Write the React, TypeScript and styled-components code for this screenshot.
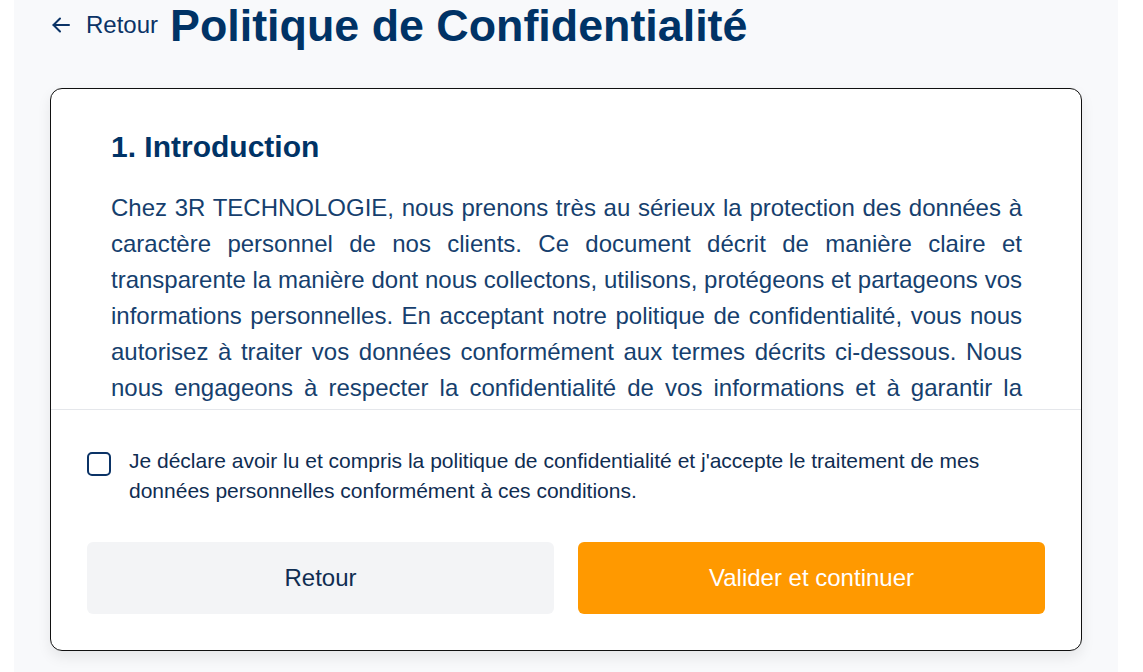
import React, {FC, useState} from 'react'
import styled, {createGlobalStyle} from 'styled-components'

const GlobalStyle = createGlobalStyle`
    * {
        box-sizing: border-box;
    }
    body {
        margin: 0;
        background: #ffffff;
        font-family: "Liberation Sans", Arial, sans-serif;
    }
`

const Page = styled.div`
    margin-left: 14px;
    width: 1104px;
    min-height: 672px;
    background: #f8f9fb;
    padding: 0 36px;
`

const Header = styled.div`
    height: 50px;
    display: flex;
    flex-direction: row;
    align-items: center;
    margin-bottom: 38px;
`

const BackLink = styled.a`
    display: flex;
    align-items: center;
    gap: 16px;
    color: #0b3366;
    font-size: 24px;
    text-decoration: none;
    cursor: pointer;
    margin-left: 2px;
    margin-right: 12px;
`

const Title = styled.h1`
    margin: 0;
    font-size: 44.8px;
    font-weight: 700;
    line-height: 50px;
    color: #003366;
`

const Card = styled.div`
    background: #ffffff;
    border: 1px solid #111111;
    border-radius: 12px;
    box-shadow: 0 6px 14px rgba(0, 0, 0, 0.08);
    overflow: hidden;
`

const ScrollArea = styled.div`
    height: 321px;
    overflow: hidden;
    padding: 40px 59px 0 60px;
    border-bottom: 1px solid #e5e7eb;
`

const SectionTitle = styled.h2`
    margin: 0 0 25px;
    font-size: 30px;
    line-height: 36px;
    font-weight: 700;
    color: #003366;
`

const Paragraph = styled.p`
    margin: 0;
    font-size: 24px;
    line-height: 36px;
    text-align: justify;
    color: #163f6e;
`

const Footer = styled.div`
    padding: 36px 36px 36px;
`

const ConsentRow = styled.label`
    display: flex;
    align-items: flex-start;
    gap: 18px;
    cursor: pointer;
`

const CheckBox = styled.span<{checked: boolean}>`
    flex: 0 0 24px;
    width: 24px;
    height: 24px;
    margin-top: 6px;
    border: 2px solid #0b3366;
    border-radius: 5px;
    background: ${props => props.checked ? '#0b3366' : '#ffffff'};
    display: flex;
    align-items: center;
    justify-content: center;
`

const ConsentText = styled.span`
    font-size: 21px;
    line-height: 30px;
    color: #0f2d52;
`

const Buttons = styled.div`
    display: grid;
    grid-template-columns: 1fr 1fr;
    gap: 24px;
    margin-top: 36px;
`

const Button = styled.button<{primary?: boolean}>`
    height: 72px;
    border: none;
    border-radius: 6px;
    font-family: "Liberation Sans", Arial, sans-serif;
    font-size: 24px;
    cursor: pointer;
    background: ${props => props.primary ? '#ff9900' : '#f3f4f6'};
    color: ${props => props.primary ? '#ffffff' : '#0f2d52'};
`

const ArrowLeft: FC = () => (
    <svg width="18" height="16" viewBox="0 0 18 16" fill="none" stroke="currentColor" strokeWidth="2" strokeLinecap="round" strokeLinejoin="round">
        <path d="M17 8H1.5" />
        <path d="M8 1.5L1.5 8L8 14.5" />
    </svg>
)

const App: FC = () => {
    const [accepted, setAccepted] = useState(false)

    return <>
        <GlobalStyle />
        <Page>
            <Header>
                <BackLink>
                    <ArrowLeft />
                    Retour
                </BackLink>
                <Title>Politique de Confidentialité</Title>
            </Header>
            <Card>
                <ScrollArea>
                    <SectionTitle>1. Introduction</SectionTitle>
                    <Paragraph>
                        Chez 3R TECHNOLOGIE, nous prenons très au sérieux la protection des données à caractère personnel de nos clients. Ce document décrit de manière claire et transparente la manière dont nous collectons, utilisons, protégeons et partageons vos informations personnelles. En acceptant notre politique de confidentialité, vous nous autorisez à traiter vos données conformément aux termes décrits ci-dessous. Nous nous engageons à respecter la confidentialité de vos informations et à garantir la sécurité de vos données personnelles.
                    </Paragraph>
                </ScrollArea>
                <Footer>
                    <ConsentRow onClick={() => setAccepted(!accepted)}>
                        <CheckBox checked={accepted}>
                            {accepted && (
                                <svg width="14" height="14" viewBox="0 0 24 24" fill="none" stroke="#ffffff" strokeWidth="3">
                                    <path d="M5 12l5 5L19 7" />
                                </svg>
                            )}
                        </CheckBox>
                        <ConsentText>
                            Je déclare avoir lu et compris la politique de confidentialité et j'accepte le traitement de mes données personnelles conformément à ces conditions.
                        </ConsentText>
                    </ConsentRow>
                    <Buttons>
                        <Button>Retour</Button>
                        <Button primary>Valider et continuer</Button>
                    </Buttons>
                </Footer>
            </Card>
        </Page>
    </>
}

export default App
